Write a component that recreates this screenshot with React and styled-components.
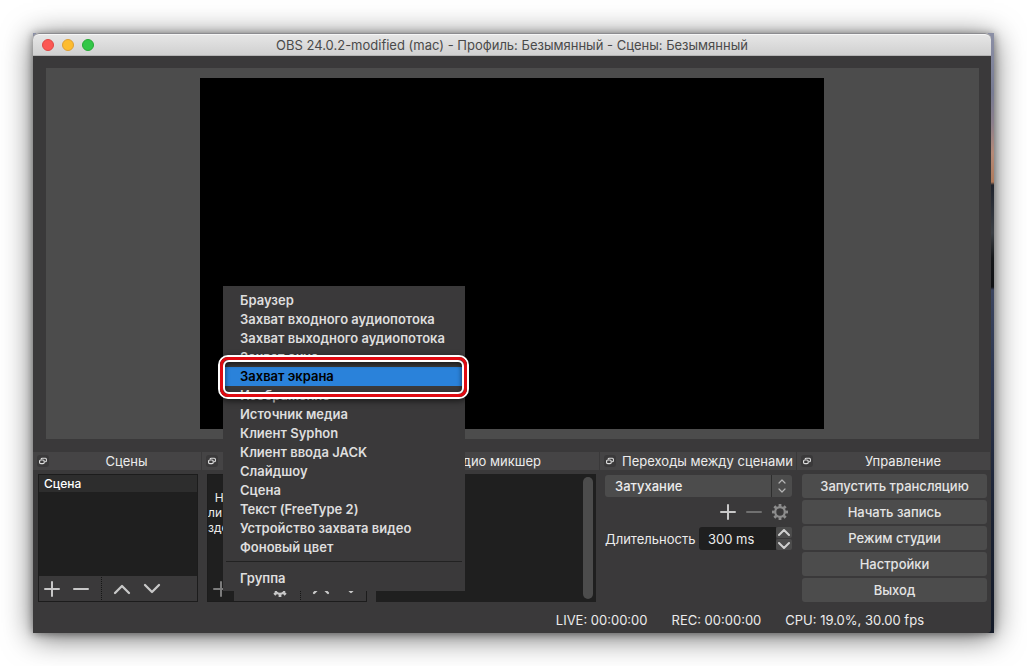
import React from "react";
import styled, { createGlobalStyle, css } from "styled-components";

const Global = createGlobalStyle`
  *, *::before, *::after { box-sizing: border-box; }
  body {
    margin: 0;
    background: #fff;
    color: #ececec;
    font: 400 13px/16px Inter, "Liberation Sans", sans-serif;
  }
  button, input, select { font: inherit; color: inherit; }
  ul, h1, h2, p { margin: 0; padding: 0; font: inherit; }
  ul { list-style: none; }
  svg { display: block; }
`;

const Page = styled.div`
  padding: 33px;
`;

const Desktop = styled.div`
  padding-right: 3px;
  background: linear-gradient(
    #8b8fa5 0, #777b93 60px, #8b7f8c 90px, #b58a78 120px, #b07b5c 149px,
    #20242e 152px, #3b3f45 200px, #15171a 225px, #101114 254px,
    #3c4560 257px, #2d3650 340px, #1b2233 480px, #141a28 100%
  );
  box-shadow: 0 4px 28px rgba(0, 0, 0, 0.6), 0 1px 8px rgba(0, 0, 0, 0.4);
`;

const Window = styled.main`
  display: flex;
  flex-direction: column;
  background: #3a393a;
  border-radius: 6px 6px 4px 0;
`;

const TitleBar = styled.header`
  display: flex;
  align-items: center;
  height: 23px;
  padding: 2px 9px 0;
  border-radius: 6px 6px 0 0;
  border-bottom: 1px solid #b4b4b4;
  background: linear-gradient(#e8e8e8, #d0d0d0);
  box-shadow: inset 0 1px 0 #8c8c90, inset 0 2px 0 #f6f6f6;
  color: #4a4a4a;
`;

const Lights = styled.div`
  display: flex;
  flex: 1;
  gap: 8px;
`;

const Light = styled.button`
  width: 12px;
  height: 12px;
  padding: 0;
  border: 1px solid ${(p) => p.$edge};
  border-radius: 50%;
  background: ${(p) => p.$fill};
`;

const Title = styled.h1`
  white-space: nowrap;
`;

const TitleSpace = styled.div`
  flex: 1;
`;

const PreviewArea = styled.section`
  padding: 12px 12px 13px 13px;
`;

const Preview = styled.div`
  padding: 10px 155px 10px 154px;
  background: #4c4c4c;
`;

const Canvas = styled.div`
  aspect-ratio: 16 / 9;
  background: #000;
`;

const Docks = styled.div`
  display: grid;
  grid-template-columns: 169fr 169fr 229fr 197fr 194fr;
`;

const Dock = styled.section`
  position: relative;
  display: flex;
  flex-direction: column;
  min-width: 0;
`;

const DockHeader = styled.header`
  display: flex;
  align-items: center;
  gap: 3px;
  height: 18px;
  padding-left: 4px;
  background: #454445;
  border-right: 1px solid #3a393a;
`;

const FloatButton = styled.button`
  display: grid;
  flex: none;
  place-items: center;
  width: 12px;
  height: 12px;
  padding: 0;
  border: 0;
  border-radius: 3px;
  background: #3a393a;
  color: #dcdcdc;
`;

const DockTitle = styled.h2`
  flex: 1;
  text-align: center;
  white-space: nowrap;
`;

const DockBody = styled.div`
  display: flex;
  flex-direction: column;
  height: 128px;
  margin: 4px 4px 0 5px;
`;

const ListBox = styled.div`
  display: flex;
  flex: 1;
  flex-direction: column;
  min-height: 0;
  border: 1px solid #1c1c1c;
  background: #1f1f1f;
`;

const ListItems = styled.ul`
  flex: 1;
`;

const SceneItem = styled.li`
  height: 17px;
  padding-left: 5px;
  background: #2d2d2d;
  color: #fff;
  font-size: 12px;
  font-weight: 500;
  line-height: 17px;
`;

const EmptyHint = styled.p`
  flex: 1;
  overflow: hidden;
  padding-top: 15px;
  font-size: 12px;
  line-height: 15px;
  white-space: pre;
`;

const Toolbar = styled.div`
  display: flex;
  align-items: center;
  height: 25px;
  background: #3a393a;
`;

const ToolButton = styled.button`
  display: grid;
  place-items: center;
  width: ${(p) => p.$width || 30}px;
  height: 100%;
  padding: 0;
  border: 0;
  background: ${(p) => (p.$pressed ? "#1f1f1f" : "transparent")};
  color: ${(p) => p.$color || "#c8c8c8"};
`;

const ToolDivider = styled.span`
  width: 1px;
  height: 23px;
  margin: 0 5px;
  border-left: 1px dotted #161616;
`;

const MixerBox = styled.div`
  display: flex;
  flex: 1;
  justify-content: flex-end;
  padding: 3px;
  background: #1f1f1f;
`;

const ScrollThumb = styled.div`
  width: 10px;
  border-radius: 5px;
  background: #4c4c4c;
`;

const Menu = styled.ul`
  position: absolute;
  z-index: 2;
  left: 21px;
  bottom: 11px;
  width: 242px;
  padding: 5px 0 3px;
  background: #3a393a;
`;

const MenuEntry = styled.li`
  position: relative;
`;

const MenuButton = styled.button`
  display: block;
  width: 100%;
  height: 19px;
  padding: 0 0 0 17px;
  border: 0;
  background: transparent;
  color: #dedede;
  font-weight: 600;
  text-align: left;
  line-height: 19px;
  white-space: nowrap;
  ${(p) =>
    p.$active &&
    css`
      background: #2a82da;
      color: #000;
    `}
`;

const MenuDivider = styled.li`
  height: 1px;
  margin: 4px 3px 7px;
  background: #222;
`;

const Marker = styled.span`
  position: absolute;
  z-index: 1;
  inset: -12px -4px -13px -5px;
  border: 2px solid #fff;
  border-radius: 10px;
  box-shadow: 0 2px 6px rgba(0, 0, 0, 0.6);
  pointer-events: none;

  &::before {
    content: "";
    position: absolute;
    inset: 0;
    border: 3px solid #e00b12;
    border-radius: 8px;
  }
  &::after {
    content: "";
    position: absolute;
    inset: 3px;
    border: 2px solid #fff;
    border-radius: 6px;
    box-shadow: inset 0 2px 5px rgba(0, 0, 0, 0.6);
  }
`;

const SelectBox = styled.div`
  position: relative;
  height: 22px;
  margin: 1px 1px 0 0;
  border-radius: 3px;
  background: #4c4c4c;
`;

const Select = styled.select`
  width: 100%;
  height: 100%;
  padding: 0 22px 0 10px;
  border: 0;
  background: transparent;
  font-weight: 500;
  appearance: none;
`;

const SelectArrows = styled.span`
  position: absolute;
  inset: 0 0 0 auto;
  display: grid;
  place-items: center;
  width: 21px;
  border-left: 1px solid #2e2e2e;
  color: #b4b4b4;
  pointer-events: none;
`;

const TransitionTools = styled.div`
  display: flex;
  justify-content: flex-end;
  height: 30px;
`;

const DurationRow = styled.div`
  display: flex;
  align-items: center;
  height: 23px;
  margin-right: 1px;
`;

const DurationLabel = styled.label`
  flex: 1;
  white-space: nowrap;
`;

const DurationInput = styled.input`
  width: 77px;
  height: 23px;
  padding: 0 0 0 9px;
  border: 0;
  border-radius: 3px 0 0 3px;
  background: #1f1f1f;
`;

const Spinner = styled.div`
  display: grid;
  gap: 1px;
  width: 16px;
  height: 23px;
`;

const SpinButton = styled.button`
  display: grid;
  place-items: center;
  padding: 0;
  border: 0;
  border-radius: 2px;
  background: #4c4c4c;
  color: #d0d0d0;
`;

const ControlList = styled.div`
  display: grid;
  gap: 2px;
`;

const ControlButton = styled.button`
  height: 24px;
  padding: 0;
  border: 0;
  border-radius: 3px;
  background: #4c4c4c;
  color: #e4e4e4;
  font-weight: 500;
  line-height: 24px;
`;

const StatusBar = styled.footer`
  display: flex;
  align-items: center;
  justify-content: flex-end;
  gap: 24px;
  height: 31px;
  padding: 5px 67px 0 0;
  white-space: nowrap;
`;

const Stroke = ({ w, h, d, sw = 2 }) => (
  <svg width={w} height={h} viewBox={`0 0 ${w} ${h}`} fill="none" stroke="currentColor" strokeWidth={sw} strokeLinecap="round" strokeLinejoin="round" aria-hidden="true">
    <path d={d} />
  </svg>
);

const PlusIcon = () => <Stroke w={16} h={16} d="M8 1v14M1 8h14" />;
const MinusIcon = () => <Stroke w={16} h={16} d="M1 8h14" />;
const UpIcon = () => <Stroke w={18} h={12} sw={2.3} d="M2 10l7-7 7 7" />;
const DownIcon = () => <Stroke w={18} h={12} sw={2.3} d="M2 2l7 7 7-7" />;

const GearIcon = () => (
  <svg width="16" height="16" viewBox="0 0 16 16" fill="none" stroke="currentColor" aria-hidden="true">
    <circle cx="8" cy="8" r="4.8" strokeWidth="2.2" />
    <g strokeWidth="2.8">
      {[0, 45, 90, 135, 180, 225, 270, 315].map((a) => (
        <path key={a} d="M8 0v2.8" transform={`rotate(${a} 8 8)`} />
      ))}
    </g>
  </svg>
);

const FloatIcon = () => (
  <svg width="8" height="8" viewBox="0 0 8 8" fill="none" stroke="currentColor" aria-hidden="true">
    <rect x="0.6" y="3" width="4.6" height="3.6" rx="1.2" strokeWidth="1.2" />
    <path d="M2.2 2.6v-.4a1 1 0 0 1 1-1h3.2a1 1 0 0 1 1 1v1.6a1 1 0 0 1-1 1h-.6" strokeWidth="1.1" />
  </svg>
);

const Header = ({ name, title }) => (
  <DockHeader>
    <FloatButton type="button" aria-label={`Открепить: ${name || title}`}>
      <FloatIcon />
    </FloatButton>
    {title && <DockTitle>{title}</DockTitle>}
  </DockHeader>
);

const sources = [
  "Браузер",
  "Захват входного аудиопотока",
  "Захват выходного аудиопотока",
  "Захват окна",
  "Захват экрана",
  "Изображение",
  "Источник медиа",
  "Клиент Syphon",
  "Клиент ввода JACK",
  "Слайдшоу",
  "Сцена",
  "Текст (FreeType 2)",
  "Устройство захвата видео",
  "Фоновый цвет",
];
const selected = "Захват экрана";

const controls = ["Запустить трансляцию", "Начать запись", "Режим студии", "Настройки", "Выход"];

const SourceMenu = () => (
  <Menu role="menu" aria-label="Добавить источник">
    {sources.map((name) => (
      <MenuEntry key={name} role="none">
        <MenuButton type="button" role="menuitem" $active={name === selected}>
          {name}
        </MenuButton>
        {name === selected && <Marker />}
      </MenuEntry>
    ))}
    <MenuDivider role="separator" />
    <MenuEntry role="none">
      <MenuButton type="button" role="menuitem">Группа</MenuButton>
    </MenuEntry>
  </Menu>
);

export default function App() {
  return (
    <>
      <Global />
      <Page>
        <Desktop>
          <Window>
            <TitleBar>
              <Lights>
                <Light type="button" aria-label="Закрыть" $fill="#fc5753" $edge="#df4744" />
                <Light type="button" aria-label="Свернуть" $fill="#fdbc2f" $edge="#de9f34" />
                <Light type="button" aria-label="Развернуть" $fill="#33c748" $edge="#27aa35" />
              </Lights>
              <Title>OBS 24.0.2-modified (mac) - Профиль: Безымянный - Сцены: Безымянный</Title>
              <TitleSpace />
            </TitleBar>

            <PreviewArea>
              <Preview>
                <Canvas />
              </Preview>
            </PreviewArea>

            <Docks>
              <Dock>
                <Header title="Сцены" />
                <DockBody>
                  <ListBox>
                    <ListItems>
                      <SceneItem>Сцена</SceneItem>
                    </ListItems>
                    <Toolbar>
                      <ToolButton type="button" aria-label="Добавить сцену" $width={26}><PlusIcon /></ToolButton>
                      <ToolButton type="button" aria-label="Удалить сцену" $width={31}><MinusIcon /></ToolButton>
                      <ToolDivider />
                      <ToolButton type="button" aria-label="Сцена вверх"><UpIcon /></ToolButton>
                      <ToolButton type="button" aria-label="Сцена вниз"><DownIcon /></ToolButton>
                    </Toolbar>
                  </ListBox>
                </DockBody>
              </Dock>

              <Dock aria-label="Источники">
                <Header name="Источники" />
                <DockBody>
                  <ListBox>
                    <EmptyHint>{"  Н\nли\nзде"}</EmptyHint>
                    <Toolbar>
                      <ToolButton type="button" aria-label="Добавить источник" $width={26} $pressed $color="#7c7c7c"><PlusIcon /></ToolButton>
                      <ToolButton type="button" aria-label="Удалить источник" $width={31}><MinusIcon /></ToolButton>
                      <ToolButton type="button" aria-label="Свойства источника"><GearIcon /></ToolButton>
                      <ToolDivider />
                      <ToolButton type="button" aria-label="Источник вверх"><UpIcon /></ToolButton>
                      <ToolButton type="button" aria-label="Источник вниз"><DownIcon /></ToolButton>
                    </Toolbar>
                  </ListBox>
                </DockBody>
                <SourceMenu />
              </Dock>

              <Dock>
                <Header title="Аудио микшер" />
                <DockBody>
                  <MixerBox>
                    <ScrollThumb />
                  </MixerBox>
                </DockBody>
              </Dock>

              <Dock>
                <Header title="Переходы между сценами" />
                <DockBody>
                  <SelectBox>
                    <Select aria-label="Переход" defaultValue="Затухание">
                      <option>Затухание</option>
                    </Select>
                    <SelectArrows>
                      <Stroke w={8} h={14} sw={1.2} d="M1 4l3-3 3 3M1 10l3 3 3-3" />
                    </SelectArrows>
                  </SelectBox>
                  <TransitionTools>
                    <ToolButton type="button" aria-label="Добавить переход" $width={26}><PlusIcon /></ToolButton>
                    <ToolButton type="button" aria-label="Удалить переход" $width={26} $color="#707070"><MinusIcon /></ToolButton>
                    <ToolButton type="button" aria-label="Свойства перехода" $width={26} $color="#8c8c8c"><GearIcon /></ToolButton>
                  </TransitionTools>
                  <DurationRow>
                    <DurationLabel htmlFor="duration">Длительность</DurationLabel>
                    <DurationInput id="duration" defaultValue="300 ms" />
                    <Spinner>
                      <SpinButton type="button" aria-label="Больше"><Stroke w={12} h={8} d="M1 6l5-5 5 5" /></SpinButton>
                      <SpinButton type="button" aria-label="Меньше"><Stroke w={12} h={8} d="M1 2l5 5 5-5" /></SpinButton>
                    </Spinner>
                  </DurationRow>
                </DockBody>
              </Dock>

              <Dock>
                <Header title="Управление" />
                <DockBody>
                  <ControlList>
                    {controls.map((label) => (
                      <ControlButton key={label} type="button">{label}</ControlButton>
                    ))}
                  </ControlList>
                </DockBody>
              </Dock>
            </Docks>

            <StatusBar>
              <span>LIVE: 00:00:00</span>
              <span>REC: 00:00:00</span>
              <span>CPU: 19.0%, 30.00 fps</span>
            </StatusBar>
          </Window>
        </Desktop>
      </Page>
    </>
  );
}
